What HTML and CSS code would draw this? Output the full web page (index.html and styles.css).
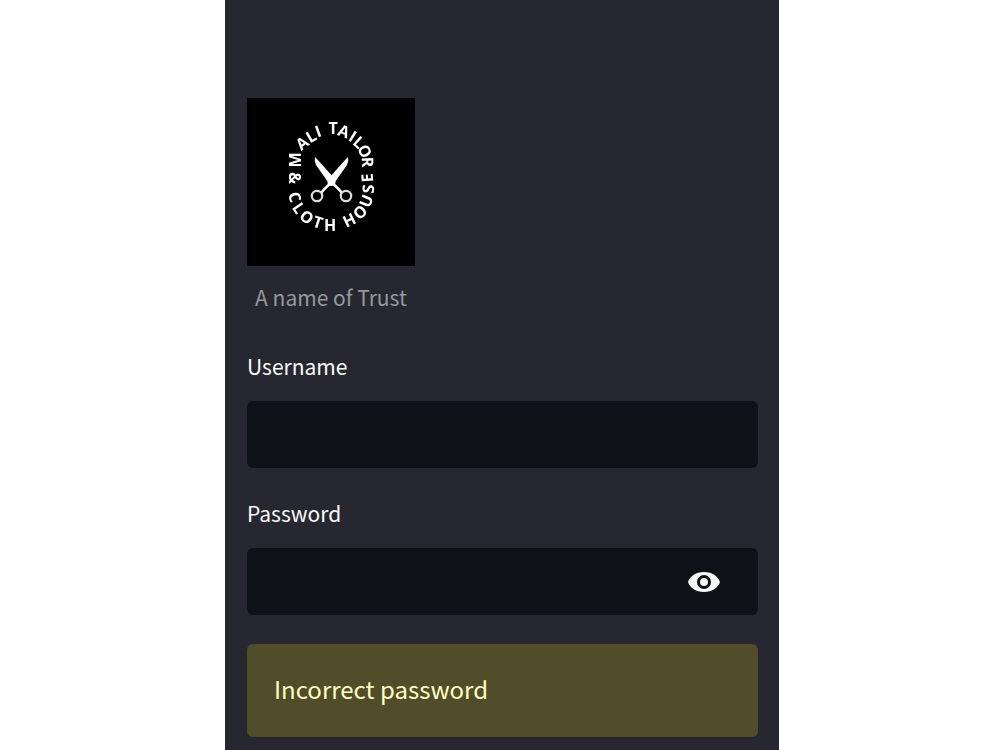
FILE: index.html
```html
<!DOCTYPE html>
<html lang="en">
<head>
<meta charset="utf-8">
<meta name="viewport" content="width=device-width, initial-scale=1">
<title>Login</title>
<link rel="stylesheet" href="styles.css">
</head>
<body>
<main class="panel">
  <figure class="brand">
    <svg class="logo" viewBox="0 0 168 168" role="img" aria-label="M Ali Tailor &amp; Cloth House">
      <defs>
        <filter id="soften" x="0" y="0" width="168" height="168" filterUnits="userSpaceOnUse">
          <feGaussianBlur stdDeviation="0.7"/>
        </filter>
      </defs>
      <rect width="168" height="168" fill="#000"/>
      <g filter="url(#soften)">
        <g class="ring">
          <text transform="translate(48 62) rotate(-90)" y="6">M</text>
          <text transform="translate(55 45) rotate(-38)" y="6">A</text>
          <text transform="translate(64 38) rotate(-30)" y="6">L</text>
          <text transform="translate(71 33) rotate(-20)" y="6">I</text>
          <text transform="translate(86 30)" y="6">T</text>
          <text transform="translate(97 33) rotate(20)" y="6">A</text>
          <text transform="translate(106 38) rotate(32)" y="6">I</text>
          <text transform="translate(112 44) rotate(42)" y="6">L</text>
          <text transform="translate(118 53) rotate(62)" y="6">O</text>
          <text transform="translate(121 64) rotate(88)" y="6">R</text>
          <text transform="translate(48 80) rotate(90)" y="6">&amp;</text>
          <text transform="translate(48 99) rotate(72)" y="6">C</text>
          <text transform="translate(52 110) rotate(56)" y="6">L</text>
          <text transform="translate(60 119) rotate(36)" y="6">O</text>
          <text transform="translate(71 124) rotate(18)" y="6">T</text>
          <text transform="translate(83 127)" y="6">H</text>
          <text transform="translate(102 122) rotate(-26)" y="6">H</text>
          <text transform="translate(113 114) rotate(-44)" y="6">O</text>
          <text transform="translate(119 103) rotate(-68)" y="6">U</text>
          <text transform="translate(121 91) rotate(-86)" y="6">S</text>
          <text transform="translate(120 80) rotate(-94)" y="6">E</text>
        </g>
        <g fill="#fff">
          <path d="M68 59Q67 63 69 67L81 84L84 87L88 83L87 80L70 61Z"/>
          <path d="M101 59Q102 63 100 67L88 84L85 87L81 83L82 80L99 61Z"/>
          <circle cx="84.500" cy="84" r="4"/>
        </g>
        <g fill="none" stroke="#fff" stroke-width="2.6">
          <path d="M85 84Q77 91 74 95M84 84Q92 91 95 95"/>
          <circle cx="70" cy="98" r="5.200" stroke="#ddd" stroke-width="2.200"/>
          <circle cx="99" cy="98" r="5.200" stroke="#ddd" stroke-width="2.200"/>
        </g>
      </g>
    </svg>
    <figcaption class="tagline">A name of Trust</figcaption>
  </figure>
  <form class="form">
    <div class="field">
      <label class="label" for="username">Username</label>
      <input class="input" id="username" type="text">
    </div>
    <div class="field">
      <label class="label" for="password">Password</label>
      <div class="control">
        <input class="input" id="password" type="password">
        <button class="reveal" type="button" aria-label="Show password">
          <svg class="eye" viewBox="0 0 34 22" aria-hidden="true">
            <path fill="#fafafa" fill-rule="evenodd" d="M17 1C9 1 3 5 1 11C3 17 9 21 17 21S31 17 33 11C31 5 25 1 17 1ZM17 4A7 7 0 1 1 17 18A7 7 0 1 1 17 4ZM17 7A4 4 0 1 0 17 15A4 4 0 1 0 17 7Z"/>
          </svg>
        </button>
      </div>
    </div>
    <div class="alert" role="alert">Incorrect password</div>
  </form>
</main>
</body>
</html>
```
FILE: styles.css
```css
* {
  box-sizing: border-box;
}

body {
  margin: 0;
  padding-left: 4px;
  background: #fff;
  color: #fafafa;
  font-family: "Noto Sans CJK SC", "Noto Sans", sans-serif;
  font-size: 21px;
  line-height: 32px;
}

.panel {
  width: 56%;
  max-width: 554px;
  min-height: 100vh;
  margin: 0 auto;
  padding: 98px 21px 13px 22px;
  background: #262730;
}

.brand {
  width: 168px;
  margin: 0 0 37px;
}

.logo {
  display: block;
  width: 100%;
}

.ring {
  fill: #fff;
  font-family: "Open Sans", sans-serif;
  font-size: 16px;
  font-weight: 700;
  text-anchor: middle;
}

.tagline {
  margin-top: 15px;
  color: #97989b;
  text-align: center;
}

.form {
  display: flex;
  flex-direction: column;
  gap: 29px;
}

.field {
  display: flex;
  flex-direction: column;
  gap: 19px;
}

.input {
  display: block;
  width: 100%;
  height: 67px;
  padding: 0 24px;
  border: 0;
  border-radius: 6px;
  background: #0e1117;
  color: inherit;
  font: inherit;
}

.control {
  display: grid;
  align-items: center;
}

.control > * {
  grid-area: 1 / 1;
}

.control .input {
  padding-right: 80px;
}

.reveal {
  justify-self: end;
  margin-right: 37px;
  padding: 0;
  border: 0;
  background: none;
  cursor: pointer;
}

.eye {
  display: block;
  width: 34px;
}

.alert {
  padding: 29px 27px 32px;
  border-radius: 6px;
  background: #514d2b;
  color: #ffffc2;
  font-size: 24px;
}
```
